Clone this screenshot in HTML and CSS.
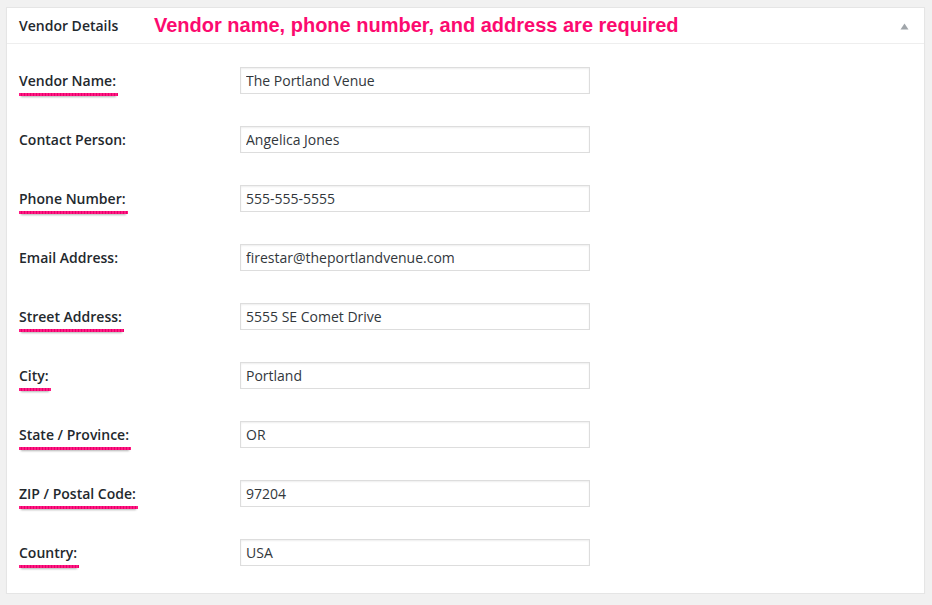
FILE: index.html
```html
<!DOCTYPE html>
<html lang="en">
<head>
    <meta charset="UTF-8">
    <meta name="viewport" content="width=device-width, initial-scale=1.0">
    <title>Vendor Details</title>
    <link rel="stylesheet" href="styles.css">
</head>
<body>
    <div class="postbox">
        <div class="hndle">
            <h2>Vendor Details</h2>
            <span class="note">Vendor name, phone number, and address are required</span>
            <svg class="toggle" width="9" height="7" viewBox="0 0 9 7"><path d="M0.5 6.5 L4.5 0.5 L8.5 6.5 Z" fill="#a0a5aa"/></svg>
        </div>
        <div class="inside">
            <div class="row">
                <label><span class="req">Vendor Name:</span></label>
                <input type="text" value="The Portland Venue">
            </div>
            <div class="row">
                <label>Contact Person:</label>
                <input type="text" value="Angelica Jones">
            </div>
            <div class="row">
                <label><span class="req">Phone Number:</span></label>
                <input type="text" value="555-555-5555">
            </div>
            <div class="row">
                <label>Email Address:</label>
                <input type="text" value="firestar@theportlandvenue.com">
            </div>
            <div class="row">
                <label><span class="req">Street Address:</span></label>
                <input type="text" value="5555 SE Comet Drive">
            </div>
            <div class="row">
                <label><span class="req">City:</span></label>
                <input type="text" value="Portland">
            </div>
            <div class="row">
                <label><span class="req">State / Province:</span></label>
                <input type="text" value="OR">
            </div>
            <div class="row">
                <label><span class="req">ZIP / Postal Code:</span></label>
                <input type="text" value="97204">
            </div>
            <div class="row">
                <label><span class="req">Country:</span></label>
                <input type="text" value="USA">
            </div>
        </div>
    </div>
</body>
</html>
```

FILE: styles.css
```css
body {
    margin: 0;
    padding: 7px 7px 0 6px;
    background-color: #f1f1f1;
    font-family: "Open Sans", "Liberation Sans", sans-serif;
    font-size: 14px;
    color: #23282d;
}
.postbox {
    background-color: #fff;
    border: 1px solid #e5e5e5;
    box-shadow: 0 1px 1px rgba(0, 0, 0, 0.04);
}
.hndle {
    display: flex;
    align-items: center;
    height: 35px;
    padding: 0 15px 0 12px;
    border-bottom: 1px solid #eee;
}
.hndle h2 {
    margin: 0;
    font-size: 14px;
    font-weight: 600;
    line-height: 1.4;
    width: 135px;
}
.note {
    flex: 1;
    font-family: "Liberation Sans", Arial, sans-serif;
    font-weight: bold;
    font-size: 20px;
    color: #fc0a6f;
}
.toggle {
    display: block;
    margin-top: 2px;
}
.inside {
    padding: 23px 12px 27px 12px;
}
.row {
    display: flex;
    align-items: center;
    height: 27px;
    margin-bottom: 32px;
}
.row:last-child {
    margin-bottom: 0;
}
.row label {
    width: 221px;
    font-weight: 600;
    color: #23282d;
}
.req {
    display: inline-block;
    padding: 0 2px 6px 0;
    margin-bottom: -8px;
    background-image: repeating-linear-gradient(90deg, #ff1a82 0 2px, #e8006c 2px 3px);
    background-size: 100% 3px;
    background-position: left bottom;
    background-repeat: no-repeat;
    box-shadow: 0 3px 2px -2px rgba(0, 0, 0, 0.3);
}
.row input {
    width: 350px;
    height: 27px;
    box-sizing: border-box;
    margin: 0;
    padding: 0 5px;
    border: 1px solid #ddd;
    box-shadow: inset 0 1px 2px rgba(0, 0, 0, 0.07);
    font-family: "Open Sans", sans-serif;
    font-size: 14px;
    color: #32373c;
    background-color: #fff;
}
```
